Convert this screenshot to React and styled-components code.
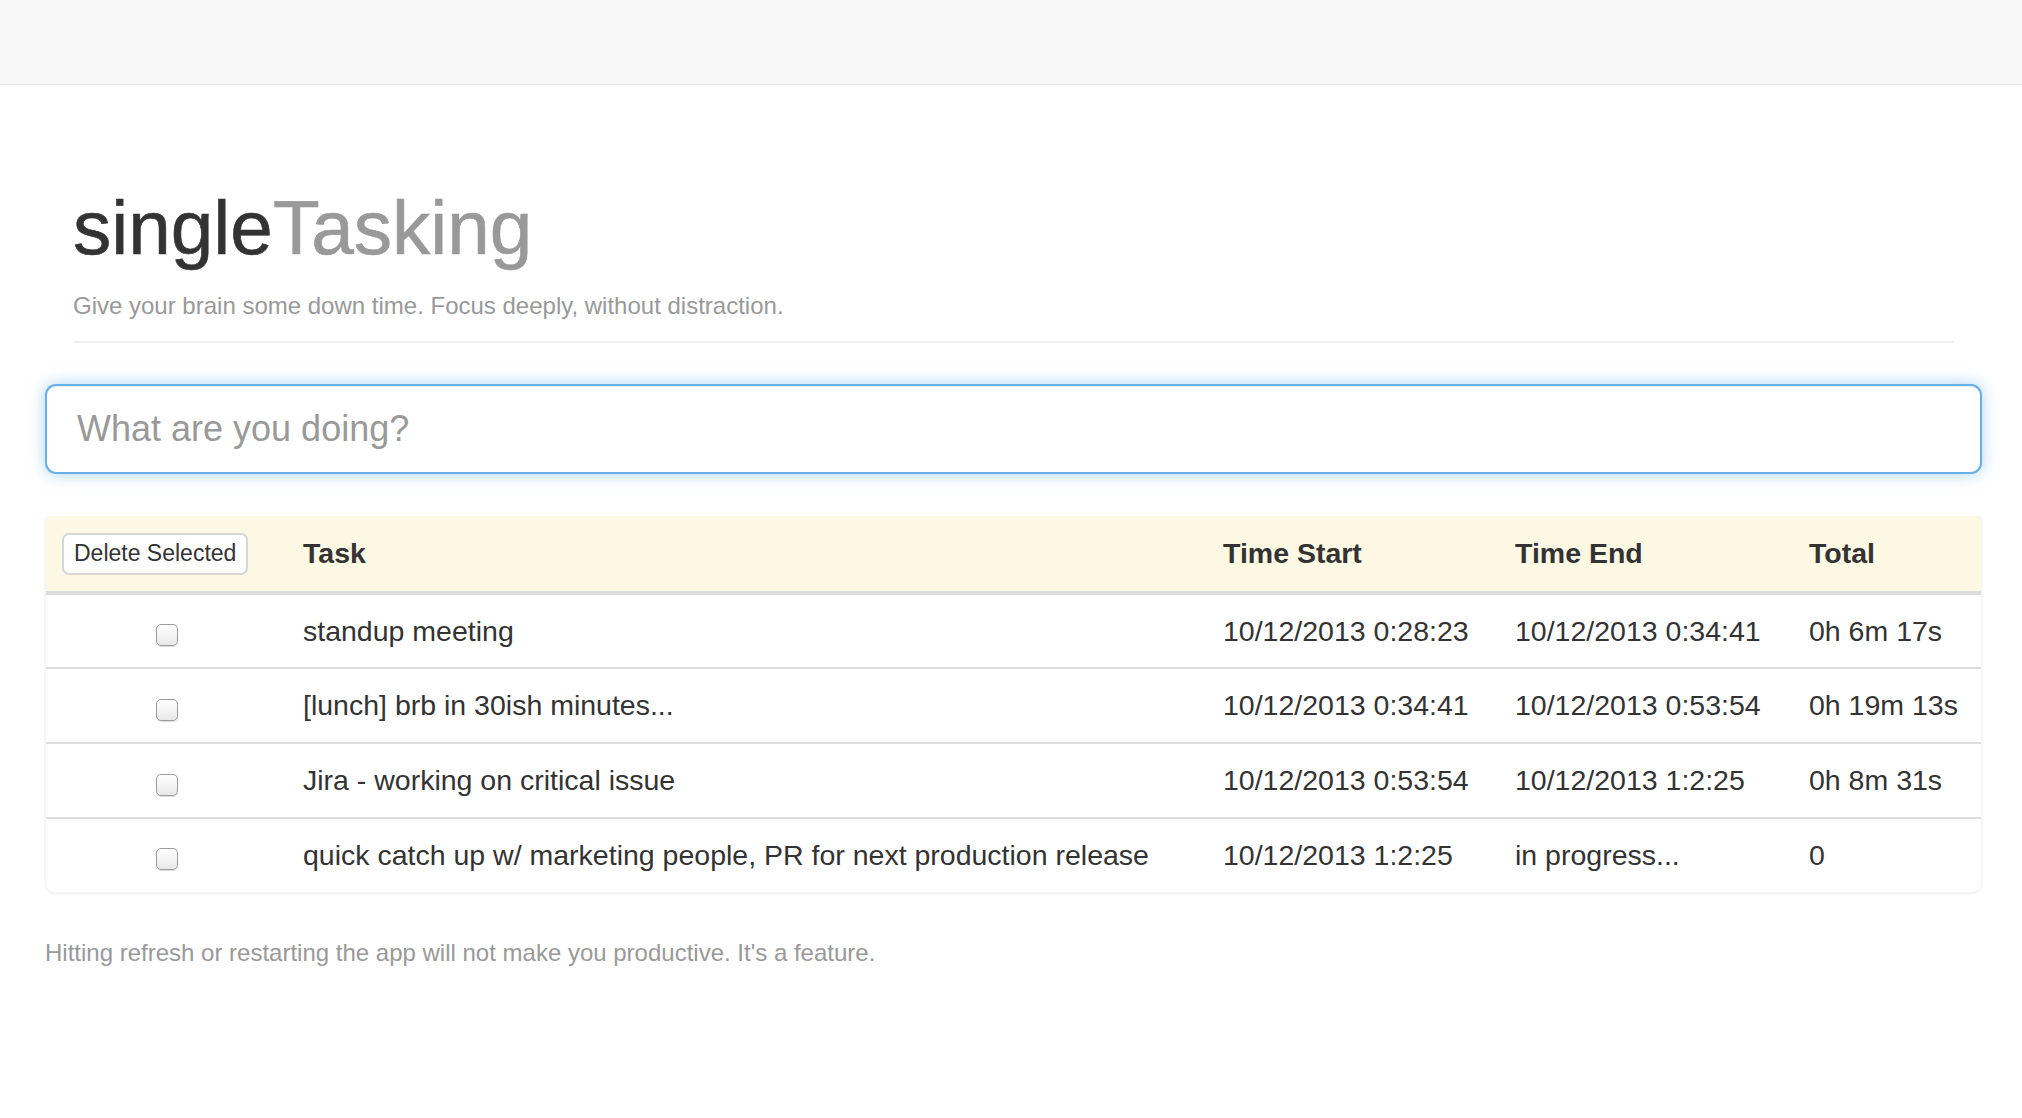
import React from 'react';
import styled, { createGlobalStyle } from 'styled-components';

const GlobalStyle = createGlobalStyle`
  html, body {
    margin: 0;
    padding: 0;
    background: #fff;
    font-family: "Liberation Sans", Arial, Helvetica, sans-serif;
    color: #333;
  }
  * { box-sizing: border-box; }
`;

const tasks = [
  { name: 'standup meeting', start: '10/12/2013 0:28:23', end: '10/12/2013 0:34:41', total: '0h 6m 17s' },
  { name: '[lunch] brb in 30ish minutes...', start: '10/12/2013 0:34:41', end: '10/12/2013 0:53:54', total: '0h 19m 13s' },
  { name: 'Jira - working on critical issue', start: '10/12/2013 0:53:54', end: '10/12/2013 1:2:25', total: '0h 8m 31s' },
  { name: 'quick catch up w/ marketing people, PR for next production release', start: '10/12/2013 1:2:25', end: 'in progress...', total: '0' },
];

const Navbar = styled.div`
  height: 85px;
  background: #f8f8f8;
  border-bottom: 1px solid #e7e7e7;
`;

const Container = styled.div`
  padding: 0 40px 0 45px;
`;

const Header = styled.div`
  padding: 101px 28px 0 28px;
`;

const Title = styled.h1`
  margin: 0;
  font-size: 76.5px;
  line-height: 1.1;
  font-weight: normal;
  color: #333;
  -webkit-text-stroke: 0.6px #333;
`;

const Muted = styled.span`
  color: #999;
  -webkit-text-stroke: 0.6px #999;
`;

const Lead = styled.p`
  margin: 19px 0 0;
  font-size: 24px;
  line-height: 1.4;
  color: #999;
`;

const Divider = styled.hr`
  margin: 18px 0 0;
  border: 0;
  border-top: 2px solid #eee;
`;

const TaskInput = styled.input`
  display: block;
  width: 100%;
  height: 90px;
  margin-top: 41px;
  padding: 0 30px;
  font-family: inherit;
  font-size: 36px;
  color: #555;
  background: #fff;
  border: 2px solid #66afe9;
  border-radius: 11px;
  box-shadow: inset 0 1px 1px rgba(0, 0, 0, 0.075), 0 0 16px rgba(102, 175, 233, 0.55);
  outline: none;

  &::placeholder {
    color: #999;
  }
`;

const Panel = styled.div`
  margin-top: 42px;
  border-radius: 4px 4px 10px 10px;
  overflow: hidden;
  background: #fff;
  box-shadow: 0 1px 3px rgba(0, 0, 0, 0.07);
  border: 1px solid #f4f4f4;
  border-top: 0;
`;

const Table = styled.table`
  width: 100%;
  border-collapse: collapse;
  table-layout: fixed;
  font-size: 28.5px;
  line-height: 1.43;
  color: #333;
`;

const HeadRow = styled.tr`
  background: #fcf8e3;
`;

const Th = styled.th`
  width: ${(p) => p.$w}px;
  padding: 17px 16px 16px;
  text-align: left;
  font-weight: bold;
  vertical-align: middle;
  border-bottom: 4px solid #ddd;
  white-space: nowrap;
`;

const Td = styled.td`
  padding: 16px;
  text-align: ${(p) => (p.$center ? 'center' : 'left')};
  vertical-align: middle;
  border-top: ${(p) => (p.$first ? '0' : '2px solid #ddd')};
  white-space: nowrap;
`;

const DeleteButton = styled.button`
  display: block;
  height: 42px;
  padding: 0 10px;
  font-family: inherit;
  font-size: 23px;
  color: #333;
  background: #fff;
  border: 2px solid #d6d6d6;
  border-radius: 7px;
  white-space: nowrap;
  line-height: 1;
`;

const Check = styled.input`
  appearance: none;
  -webkit-appearance: none;
  display: inline-block;
  width: 22px;
  height: 22px;
  margin: 4px 0 0;
  vertical-align: middle;
  border: 1px solid #9c9c9c;
  border-radius: 5px;
  background: linear-gradient(#ffffff, #e8e8e8);
  box-shadow: 0 1px 1px rgba(0, 0, 0, 0.15);
`;

const Footer = styled.p`
  margin: 43px 0 0;
  font-size: 24px;
  line-height: 1.4;
  color: #999;
`;

export default function App() {
  return (
    <>
      <GlobalStyle />
      <Navbar />
      <Container>
        <Header>
          <Title>
            single<Muted>Tasking</Muted>
          </Title>
          <Lead>Give your brain some down time. Focus deeply, without distraction.</Lead>
          <Divider />
        </Header>
        <TaskInput placeholder="What are you doing?" />
        <Panel>
          <Table>
            <thead>
              <HeadRow>
                <Th $w={241}>
                  <DeleteButton>Delete Selected</DeleteButton>
                </Th>
                <Th $w={920}>Task</Th>
                <Th $w={292}>Time Start</Th>
                <Th $w={294}>Time End</Th>
                <Th $w={190}>Total</Th>
              </HeadRow>
            </thead>
            <tbody>
              {tasks.map((t, i) => (
                <tr key={t.name}>
                  <Td $center $first={i === 0}>
                    <Check type="checkbox" />
                  </Td>
                  <Td $first={i === 0}>{t.name}</Td>
                  <Td $first={i === 0}>{t.start}</Td>
                  <Td $first={i === 0}>{t.end}</Td>
                  <Td $first={i === 0}>{t.total}</Td>
                </tr>
              ))}
            </tbody>
          </Table>
        </Panel>
        <Footer>Hitting refresh or restarting the app will not make you productive. It's a feature.</Footer>
      </Container>
    </>
  );
}
